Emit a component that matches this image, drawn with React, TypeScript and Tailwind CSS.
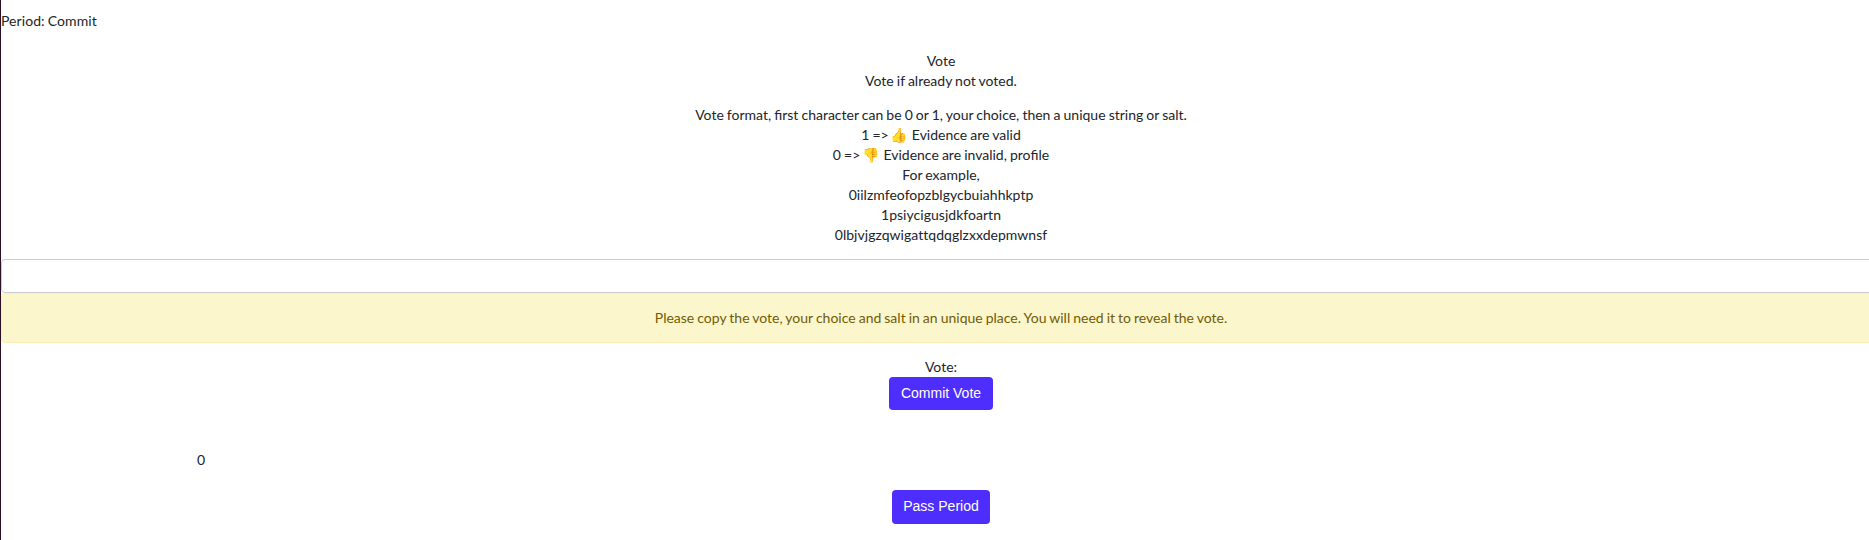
const buttonClass =
  "block rounded-[4px] bg-[#4e2eff] pb-[2px] text-center font-['Liberation_Sans',sans-serif] text-[14px] leading-[20px] tracking-normal text-white [word-spacing:0px]";

const samples = [
  '0iilzmfeofopzblgycbuiahhkptp',
  '1psiycigusjdkfoartn',
  '0lbjvjgzqwigattqdqglzxxdepmwnsf',
];

function Thumb({ symbol }: { symbol: string }) {
  return <span className="-ml-[1.5px] mr-[1.5px] inline-block h-[16px] text-[14px] leading-[16px] brightness-110">{symbol}</span>;
}

export default function App() {
  return (
    <div className="h-[540px] overflow-hidden border-l border-[#2c1126] bg-white font-[Lato,sans-serif] text-[14px] leading-[20px] text-[#212529] [word-spacing:-0.5px]">
      <div className="flex w-[1880px] flex-col items-center pt-[11px] text-center">
        <p className="w-full text-left tracking-[0.07px]">Period: Commit</p>
        <p className="mt-[20px]">Vote</p>
        <p>Vote if already not voted.</p>
        <div className="mt-[14px] whitespace-nowrap">
          <p>Vote format, first character can be 0 or 1, your choice, then a unique string or salt.</p>
          <p className="h-[20px]">1 =&gt; <Thumb symbol="👍" /> Evidence are valid</p>
          <p className="h-[20px]">0 =&gt; <Thumb symbol="👎" /> Evidence are invalid, profile</p>
          <p>For example,</p>
          {samples.map((sample) => (
            <p key={sample} className="tracking-[0.03px]">{sample}</p>
          ))}
        </div>
        <input
          aria-label="Vote"
          className="mt-[14px] h-[34px] w-full rounded-[4px] border border-[#cbcbd3] bg-white px-3 outline-none"
        />
        <div className="h-[50px] w-full rounded-[4px] border border-[#ffeeba] bg-[#fcf6cc] pt-[14px] text-[#705c06] [word-spacing:-0.56px]">
          Please copy the vote, your choice and salt in an unique place. You will need it to reveal the vote.
        </div>
        <p className="mt-[14px]">Vote:</p>
        <button className={`${buttonClass} h-[33px] w-[104px]`}>Commit Vote</button>
        <p className="mt-[40px] w-full pl-[196px] text-left">0</p>
        <button className={`${buttonClass} mt-[20px] h-[34px] w-[98px]`}>Pass Period</button>
      </div>
    </div>
  );
}
